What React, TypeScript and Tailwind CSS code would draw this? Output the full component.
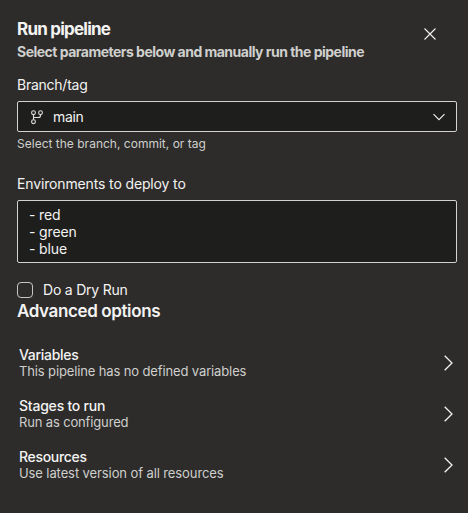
import React from "react";

const options = [
  { title: "Variables", detail: "This pipeline has no defined variables", titleSpacing: "tracking-[-0.3px]", detailSpacing: "tracking-[-0.13px]" },
  { title: "Stages to run", detail: "Run as configured", titleSpacing: "tracking-[-0.22px]", detailSpacing: "tracking-[-0.15px]" },
  { title: "Resources", detail: "Use latest version of all resources", titleSpacing: "tracking-[-0.32px]", detailSpacing: "tracking-[-0.1px]" },
];

function BranchIcon() {
  return (
    <svg width="14" height="16" viewBox="0 0 14 16" fill="none" stroke="#dededc" strokeWidth="1.1">
      <circle cx="3.5" cy="3.7" r="1.9" />
      <circle cx="10.5" cy="3.7" r="1.9" />
      <circle cx="3.5" cy="12.7" r="1.9" />
      <path d="M3.5 5.600v5.200M10.500 5.600v.900a2 2 0 0 1-2 2h-5" />
    </svg>
  );
}

export default function App() {
  return (
    <main className="flex h-[513px] w-[468px] flex-col bg-[#2d2c2a] pt-[18px] pr-[11px] pl-[17px] font-['Inter','Liberation_Sans',sans-serif] text-sm leading-5 tracking-[-0.14px] text-[#f3f3f2]">
      <header className="flex items-start justify-between pr-[21px]">
        <div>
          <h1 className="text-[17px] leading-[22px] font-bold tracking-[-0.77px]">Run pipeline</h1>
          <p className="mt-0.5 font-bold tracking-[-0.515px] text-[#cfcfcd]">Select parameters below and manually run the pipeline</p>
        </div>
        <button aria-label="Close" className="mt-[10px]">
          <svg width="12" height="12" viewBox="0 0 12 12" fill="none" stroke="#f3f3f2" strokeWidth="1.1">
            <path d="M.5.5l11 11M11.5.5l-11 11" />
          </svg>
        </button>
      </header>

      <label className="mt-[13px] tracking-[-0.25px]">Branch/tag</label>
      <button className="mt-1.5 flex h-[31px] items-center rounded-[2px] border border-[#d2d2cf] bg-[#1e1e1c] pr-[11px] pl-3 text-left">
        <BranchIcon />
        <span className="ml-[9px] flex-1 tracking-[-0.35px]">main</span>
        <svg width="12" height="8" viewBox="0 0 12 8" fill="none" stroke="#f3f3f2" strokeWidth="1.1">
          <path d="M.5 1.2L6 6.7l5.500-5.500" />
        </svg>
      </button>
      <p className="mt-1 text-xs leading-4 tracking-[0.01px] text-[#cfcfcd]">Select the branch, commit, or tag</p>

      <label className="mt-[22px]">Environments to deploy to</label>
      <div className="mt-1.5 h-[63px] rounded-[2px] border border-[#d2d2cf] bg-[#1e1e1c] px-[11px] py-[5px] leading-[17px] whitespace-pre-line">
        {"- red\n- green\n- blue"}
      </div>

      <label className="mt-[19px] flex h-4 items-center">
        <span className="size-4 rounded-[4px] border border-[#c6c6c3]" />
        <span className="ml-[10px] leading-4 tracking-[-0.22px]">Do a Dry Run</span>
      </label>
      <h2 className="mt-0.5 text-[17px] leading-[22px] font-semibold tracking-[-0.38px]">Advanced options</h2>

      <div className="mt-[25px] flex flex-col gap-[19px] pr-1 pl-0.5">
        {options.map((option) => (
          <button key={option.title} className="flex h-8 items-center justify-between text-left">
            <span className="flex flex-col leading-4">
              <span className={`font-medium ${option.titleSpacing}`}>{option.title}</span>
              <span className={`text-[13px] text-[#cfcfcd] ${option.detailSpacing}`}>{option.detail}</span>
            </span>
            <svg width="9" height="16" viewBox="0 0 9 16" fill="none" stroke="#f3f3f2" strokeWidth="1.3">
              <path d="M.7.7L8 8 .7 15.300" />
            </svg>
          </button>
        ))}
      </div>
    </main>
  );
}
